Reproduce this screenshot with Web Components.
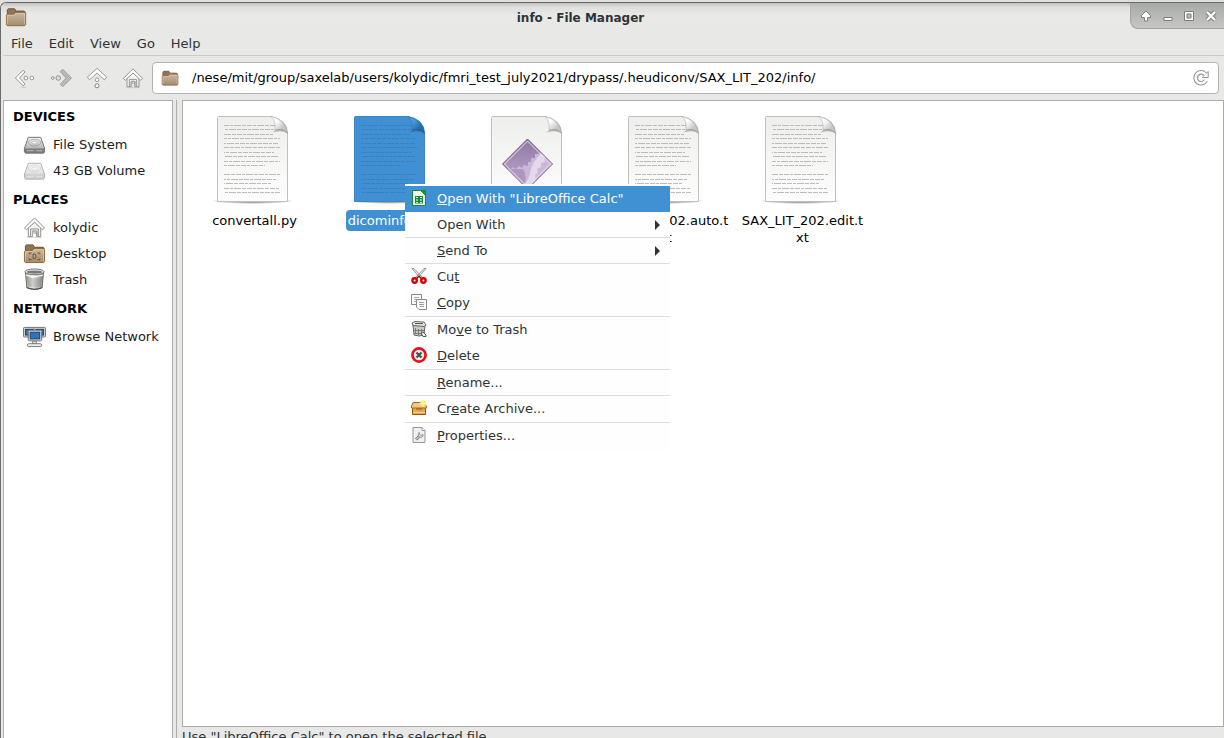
<!DOCTYPE html>
<html lang="en">
<head>
<meta charset="utf-8">
<title>info - File Manager</title>
<style>
html, body { margin: 0; height: 100%; overflow: hidden; }
body { font: 13px/17px "DejaVu Sans", sans-serif; color: #2e3436; background: #e8e8e7; }
</style>
</head>
<body>
<file-manager></file-manager>
<script>
const def = (name, html, init) => {
  const t = document.createElement('template');
  t.innerHTML = html;
  customElements.define(name, class extends HTMLElement {
    connectedCallback() {
      if (this.shadowRoot) return;
      this.attachShadow({ mode: 'open' }).append(t.content.cloneNode(true));
      if (init) init.call(this, this.shadowRoot);
    }
  });
};

const house = `<path d="M5.500 12v9.500h4.500v-6h4v6h4.500V12L12 6.500z" fill="#f6f6f5" stroke="#8b8d89"/><path d="M8 21v-7.500h8V21" fill="none" stroke="#8b8d89"/><path d="M10 21.500v-5.500h1.500v2h2v-2H15v5.500" fill="none" stroke="#aaaca8"/><path d="M12 2 1.500 12.500 3.500 14.500 12 6.500l8.500 8 2-2z" fill="#fdfdfc" stroke="#8b8d89" stroke-linejoin="round"/><path d="M4 22.500h16" stroke="#55575333"/>`;
const drive = (a, b, c, d) => `<defs><linearGradient id="g" x2="0" y2="1"><stop stop-color="${a}"/><stop offset="1" stop-color="${b}"/></linearGradient></defs><path d="M5.500 4.500h13L22.500 16H1.500z" fill="url(#g)" stroke="${c}" stroke-linejoin="round"/><path d="M1.500 15.500h21v4l-1 1.500h-19l-1-1.500z" fill="${d}" stroke="${c}"/><ellipse cx="12" cy="10" rx="6.500" ry="3.500" fill="none" stroke="${c}" stroke-opacity=".4"/><ellipse cx="12" cy="10" rx="3" ry="1.500" fill="#fff" fill-opacity=".6" stroke="${c}" stroke-opacity=".3"/><path d="M2 15.500h20" stroke="#fff" stroke-opacity=".7"/><path d="M4 18.500h7M14 18.500h6" stroke="#fff" stroke-opacity=".5"/>`;
const folder = `<defs><linearGradient id="f" x2="0" y2="1"><stop stop-color="#cdb9a0"/><stop offset="1" stop-color="#a38b6f"/></linearGradient></defs><path d="M2.500 19V4.500l1-1.500h7l1.500 2.500h9l1 1V19z" fill="#8b765c" stroke="#6e4f27"/><path d="M1.500 20.500V10l1-1h7l2-2h10l1 1v12.500l-1 1h-19z" fill="url(#f)" stroke="#8f6328"/><path d="M2.500 20V10.500l.5-.5h7l2-2h9l.5.500V20" fill="none" stroke="#e2d3bf" stroke-opacity=".7"/>`;
const bin = `<defs><linearGradient id="b"><stop stop-color="#9a9d98"/><stop offset=".4" stop-color="#f2f3f1"/><stop offset="1" stop-color="#8b8e89"/></linearGradient><pattern id="m" width="2" height="2" patternUnits="userSpaceOnUse"><path d="M0 0h1v1H0zM1 1h1v1H1z" fill="#555753"/></pattern></defs><path d="M2.500 4 4 20.500q8 3.500 16 0L21.500 4z" fill="url(#b)" stroke="#6d706b"/><path d="M4 9.500l1 9.500q7 2.500 14 0l1-9.500q-8 2.500-16 0z" fill="url(#m)" fill-opacity=".45"/><ellipse cx="12" cy="4" rx="10" ry="3" fill="#f3f4f2" stroke="#6d706b"/><ellipse cx="12" cy="4.200" rx="8" ry="1.700" fill="#777974"/><path d="M3 7.500q9 3 18 0" fill="none" stroke="#fff"/><path d="M4 20.500q8 3.500 16 0" fill="none" stroke="#3c3e3b"/>`;
const textRows = [[13,51],[17,55],[22,49],[26,56],[31,54],[35,57],[40,50],[44,54],[49,56],[53,41],[62,56],[67,53],[71,48],[76,56],[80,56]];
const sheet = (fill, edge, fold) => `<defs><linearGradient id="s" x2="0" y2="1"><stop stop-color="${fill[0]}"/><stop offset="1" stop-color="${fill[1]}"/></linearGradient><radialGradient id="sh"><stop stop-color="#000" stop-opacity=".7"/><stop offset="1" stop-color="#000" stop-opacity="0"/></radialGradient><linearGradient id="c" y2="1"><stop offset=".3" stop-color="${fold[0]}"/><stop offset=".7" stop-color="${fold[1]}"/></linearGradient></defs>
<ellipse cx="45.500" cy="89" rx="41" ry="3" fill="url(#sh)"/><path d="M10.500 89.500V5.500q0-1 1-1H64q7 1 12 5.500 4.500 4.500 4.500 11v68.500z" fill="url(#s)" stroke="${edge}"/>`;
const rows = c => `<g stroke="${c}" stroke-dasharray="5 1 3 1 7 1 4 1">${textRows.map(([y, w], i) => `<path d="M17 ${y + .5}h${w}" stroke-dashoffset="${i * 5 % 13}"/>`).join('')}</g>`;
const curl = (a, b) => `<path d="M64 4.500q5 4 4 13.500 8-2 12.500 3.500Q79 8 64 4.500z" fill="url(#c)" stroke="${b}" stroke-opacity=".3"/><path d="M68.500 18q8-2.500 12 3.500-5-4-15-1z" fill="${b}" fill-opacity=".5"/>`;
const screen = (x, y, w, h) => `<rect x="${x}.5" y="${y}.5" width="${w}" height="${h}" rx="1" fill="#deded9" stroke="#6d706b"/><rect x="${x + 2}.500" y="${y + 2}.500" width="${w - 4}" height="${h - 4}" fill="#3172b8" stroke="#173e6c"/>`;

/* name: [viewBox, markup] */
const ICONS = {
  folder: ['0 0 24 24', folder],
  desktop: ['0 0 24 24', folder + `<path d="M6.500 13v-1.500H9M15 11.500h2.500V13M6.500 17v1.500H9M15 18.500h2.500V17M10.500 12.500h2l1 1v3l-1 1h-2z" fill="none" stroke="#6e5431"/>`],
  home: ['0 0 24 24', house],
  drive: ['0 0 24 24', drive('#f4f4f3', '#b4b6b3', '#70726e', '#7c7e7b')],
  volume: ['0 0 24 24', drive('#f7f7f6', '#e2e3e1', '#b0b2ae', '#d0d1ce')],
  trash: ['0 0 24 24', bin],
  network: ['0 0 24 24', screen(0, 2, 12, 10) + screen(11, 2, 12, 10) + screen(5, 5, 14, 11) + `<path d="M10 17h4v2.500h-4z" fill="#ddd" stroke="#888a85"/><rect x="4.500" y="19.500" width="15" height="3" rx="1.500" fill="#eee" stroke="#777974"/>`],
  back: ['0 0 24 24', `<path d="M10 3.500 1.500 12l8.500 8.500 2-2L6 12l6-6.500z" fill="#fdfdfd" stroke="#8f918d" stroke-linejoin="round"/><path d="M8 22h5" stroke="#bbb"/><circle cx="13" cy="12" r="2" fill="#fff" stroke="#8f918d"/><circle cx="19.500" cy="12" r="2" fill="#fff" stroke="#8f918d"/>`],
  forward: ['0 0 24 24', `<defs><pattern id="h" width="2" height="2" patternUnits="userSpaceOnUse"><path d="M0 0h1v1H0zM1 1h1v1H1z" fill="#888"/></pattern></defs><path d="m14 2.500 9.500 9.500-9.500 9.500-3-2.500 6.500-7-6.500-7z" fill="url(#h)" stroke="#a0a29e"/><circle cx="3" cy="12" r="1.500" fill="#eee" stroke="#8f918d"/><circle cx="9" cy="12" r="2.500" fill="#ddd" stroke="#8f918d"/>`],
  up: ['0 0 24 24', `<path d="M12 1.500 1.500 11l2.500 3 8-7.500 8 7.500 2.500-3z" fill="#fdfdfd" stroke="#8f918d" stroke-linejoin="round"/><circle cx="12" cy="14" r="2" fill="#fff" stroke="#8f918d"/><circle cx="12" cy="20.500" r="2.200" fill="#fff" stroke="#777"/>`],
  reload: ['0 0 16 16', `<path d="M12.800 10.500A5.500 5.500 0 1 1 12 4" fill="none" stroke="#929491" stroke-width="4.500"/><path d="M9.500 7.500h5.700V1.500L9.500 7z" fill="#fff" stroke="#929491"/><path d="M13 10A5.500 5.500 0 1 1 12.500 4.500" fill="none" stroke="#fff" stroke-width="2.500"/><path d="M11.500 9.500A3.500 3.500 0 1 1 10 5" fill="none" stroke="#929491" stroke-width=".6"/>`],
  shade: ['0 0 12 12', `<path d="M6 1 1.500 5.500V7.500H4.500V11h3V7.500h3V5.500z" fill="#fff" stroke="#7c7e7b"/>`],
  minimize: ['0 0 12 12', `<path d="M2 7.500h8v3H2z" fill="#fff" stroke="#7c7e7b"/>`],
  maximize: ['0 0 12 12', `<path d="M1.500 1.500h9v9h-9z" fill="#fff" stroke="#7c7e7b"/><path d="M4 4h4v4H4z" fill="#bbb" stroke="#7c7e7b"/>`],
  close: ['0 0 12 12', `<path d="m2 2 8 8M10 2l-8 8" stroke="#7c7e7b" stroke-width="4.500"/><path d="m2 2 8 8M10 2l-8 8" stroke="#fff" stroke-width="2.400"/>`],
  calc: ['0 0 16 16', `<path d="M1.500.5h8l5 5v10h-13z" fill="#f3faf1" stroke="#168a35"/><path d="M9.500.5h5v5z" fill="#18a303" stroke="#168a35"/><path d="M4 6h8v7.500H4z" fill="#168a35"/><path d="M5 7h2v1H5zM9 7h2v1H9zM5 9.500h2v1H5zM9 9.500h2v1H9zM5 12h2v.8H5zM9 12h2v.8H9z" fill="#fff"/>`],
  cut: ['0 0 16 16', `<path d="M1 .5 10 11l1.500-1.500L3 .5zM15 .5 6 11 4.500 9.500 13 .5z" fill="#eeeeec" stroke="#80827e" stroke-width=".8"/><circle cx="3.600" cy="12.500" r="2.200" fill="#fff" stroke="#d40000" stroke-width="2.400"/><circle cx="12.400" cy="12.500" r="2.200" fill="#fff" stroke="#d40000" stroke-width="2.400"/><path d="m6 10 2-2 2 2" fill="none" stroke="#b00" stroke-width="1.200"/>`],
  copy: ['0 0 16 16', `<path d="M.5.5h10v10h-10z" fill="#fafafa" stroke="#898b87"/><path d="M3 3.500h5M3 5.500h5M3 7.500h3" stroke="#aaa"/><path d="M5.500 5.500h10v10H8l-2.500-2.500z" fill="#fafafa" stroke="#898b87"/><path d="M8 8.500h5M8 10.500h5M9 12.500h4" stroke="#999"/>`],
  bin: ['0 0 16 16', `<path d="m2 4 1 10q5 2 10 0l1-10z" fill="#c8cac6" stroke="#666864"/><path d="M4.500 7v6M7.500 8v6M10.500 8v6M3 9.500h10M3.500 12.500h9" stroke="#7a7c78"/><path d="m1 2 3-1.500 9 .5 2 3-2 1.500L2 4.500z" fill="#e3e5e1" stroke="#666864"/><path d="m4 2.500 8 0" stroke="#555"/><path d="m10 12 2-1 3 3v1.500h-3z" fill="#eee" stroke="#555753"/>`],
  delete: ['0 0 16 16', `<circle cx="8" cy="8" r="6.600" fill="#f2f2f1" stroke="#e8121c" stroke-width="2.700"/><path d="m5.500 5.500 5 5M10.500 5.500l-5 5" stroke="#4b4d4a" stroke-width="2.200"/>`],
  archive: ['0 0 16 16', `<path d="M1.500 6.500h13v8h-13z" fill="#e3a55b" stroke="#8f5902"/><path d="M2 2.500h11l2.500 4v1.500H.5V6z" fill="#f2c884" stroke="#a8671a"/><path d="M5 9h6" stroke="#8f5902"/><path d="M2 12.500h12" stroke="#f3cf98"/><circle cx="12" cy="3.500" r="3" fill="#fce94f"/><path d="M12 0v7M8.500 3.500h7" stroke="#fffbc0"/>`],
  properties: ['0 0 16 16', `<path d="M2 .5h9l3 3v12H2z" fill="#f0f0ef" stroke="#969893"/><path d="M11 .5v3h3" fill="#fff" stroke="#969893"/><path d="M5 12.500 8.500 9" stroke="#80827e" stroke-width="3"/><path d="M5 12.500 8.500 9" stroke="#fff"/><path d="M8 5.500Q6.500 8 8 10q2.500 1.500 4-1V7.500L10 8.500 9 7.500z" fill="#ddd" stroke="#80827e" stroke-width=".8"/>`],
  text: ['0 0 95 96', sheet(['#eeefec', '#fdfdfd'], '#bfc1bd', ['#fff', '#c4c6c2']) + rows('#bbbcb9') + curl('#fff', '#777')],
  selected: ['0 0 95 96', sheet(['#4090d4', '#4090d4'], '#3c86c5', ['#4a9ade', '#276ba6']) + rows('#3a80be') + curl('#4090d4', '#174e80')],
  script: ['0 0 95 96', sheet(['#eeefec', '#fdfdfd'], '#bfc1bd', ['#fff', '#c4c6c2']) + `<defs><linearGradient id="p" x2="0" y2="1"><stop stop-color="#8f76a4"/><stop offset="1" stop-color="#c3aed0"/></linearGradient><clipPath id="k"><path d="M46.500 28 71 52 46.500 76 22 52z"/></clipPath></defs><path d="M46.500 27 71.500 52 46.500 77 21.500 52z" fill="url(#p)" stroke="#77527f"/><g clip-path="url(#k)"><path d="M20 56l10 1 2-2 3 2 3-3 3 2 2-3 4 1 0-4 3 0 0-4 4 0 0-4 4 0 1-3h20v40H20z" fill="#c9b9d6"/><path d="M62 40l4 3-3 3 1 4-4 1 0 4-4 2 1 4-3 2 1 4-3 8H40q8-6 9-14 2-12 13-21z" fill="#e3d9ea"/><path d="M20 57h22q4 6 2 14l-8 6z" fill="#ad96bf"/></g><path d="M46.500 29 69.500 52 46.500 75 23.500 52z" fill="none" stroke="#eee3f2"/>` + curl('#fff', '#777')]
};

def('fm-icon', `<style>:host{display:block;flex:none;width:var(--w,24px);height:var(--h,var(--w,24px))}svg{display:block;width:100%;height:100%}</style>`, function (r) {
  const [box, body] = ICONS[this.getAttribute('name')];
  const t = document.createElement('template');
  t.innerHTML = `<svg viewBox="${box}" fill="none" aria-hidden="true">${body}</svg>`;
  r.append(t.content);
});

const icon = name => {
  const i = document.createElement('fm-icon');
  i.setAttribute('name', name);
  return i;
};

def('title-bar', `<style>
:host{display:grid;grid-template-columns:30px 1fr 94px;height:28px;background:linear-gradient(#bfc1be,#dededd 4px,#e9e9e8 12px,#e8e8e7);border-radius:6px 0 0 0}
.app{--w:22px;padding:3px 4px}
h1{margin:0;font-size:12px;line-height:30px;text-align:center}
.controls{display:flex;align-items:center;justify-content:space-around;padding:0 2px 0 4px;height:26px;box-sizing:border-box;background:linear-gradient(#a8aaa7,#c6c7c5);border:1px solid #a2a4a1;border-width:0 0 1px 1px;border-radius:0 0 0 8px}
button{border:0;background:none;padding:0;--w:12px}
</style><div class="app"><fm-icon name="folder"></fm-icon></div><h1><slot></slot></h1>
<div class="controls"><button aria-label="Shade"><fm-icon name="shade"></fm-icon></button><button aria-label="Minimize"><fm-icon name="minimize"></fm-icon></button><button aria-label="Maximize"><fm-icon name="maximize"></fm-icon></button><button aria-label="Close"><fm-icon name="close"></fm-icon></button></div>`);

def('menu-bar', `<style>
:host{display:flex;height:24px;margin-left:2px;border-bottom:1px solid #cbccca}
button{border:0;background:none;padding:0 8px;font:inherit;color:inherit}
</style><button>File</button><button>Edit</button><button>View</button><button>Go</button><button>Help</button>`);

def('tool-bar', `<style>
:host{display:flex;align-items:center;height:44px;padding:0 5px 0 6px}
button{border:0;background:none;padding:0;width:36px;display:flex;justify-content:center;--w:22px}
label{flex:1;display:flex;align-items:center;height:32px;box-sizing:border-box;border:1px solid #b3b4b2;border-radius:4px;background:#fff;padding-left:8px;gap:13px;--w:18px}
input{flex:1;min-width:0;border:0;outline:0;padding:0 0 2px;background:none;font:inherit;color:#000}
label button{--w:16px;width:34px}
nav{display:flex;width:145px}
</style><nav aria-label="Navigation"><button aria-label="Back"><fm-icon name="back"></fm-icon></button><button aria-label="Forward"><fm-icon name="forward"></fm-icon></button><button aria-label="Up"><fm-icon name="up"></fm-icon></button><button aria-label="Home"><fm-icon name="home"></fm-icon></button></nav>
<label><fm-icon name="folder"></fm-icon><input aria-label="Location" value="/nese/mit/group/saxelab/users/kolydic/fmri_test_july2021/drypass/.heudiconv/SAX_LIT_202/info/"><button aria-label="Reload"><fm-icon name="reload"></fm-icon></button></label>`);

def('side-group', `<style>
:host{display:block;color:#000}
h2{margin:0;padding-left:9px;font-size:13px;line-height:31px}
</style><h2></h2><slot></slot>`, function (r) { r.querySelector('h2').textContent = this.getAttribute('heading'); });

def('side-item', `<style>
:host{display:block}
a{display:flex;align-items:center;height:26px;box-sizing:border-box;padding:0 0 2px 19px;gap:7px;color:#1c1c1c;text-decoration:none;white-space:nowrap;--w:23px}
</style><a href="#"><span><slot></slot></span></a>`, function (r) {
  r.querySelector('a').prepend(icon(this.getAttribute('icon')));
});

def('file-item', `<style>
:host{display:flex;flex-direction:column;align-items:center;color:#000;--w:95px;--h:96px}
span{max-width:126px;margin-top:2px;padding:2px;border-radius:4px;text-align:center;word-break:break-all}
:host([selected]) span{background:#4090d4;color:#fff}
</style><span><slot></slot></span>`, function (r) {
  r.insertBefore(icon(this.getAttribute('icon')), r.querySelector('span'));
});

def('menu-item', `<style>
:host{display:block}
button{display:flex;align-items:center;gap:10px;width:100%;height:26px;padding:0 10px 2px 6px;border:0;background:none;font:inherit;color:#2e3436;text-align:left;--w:16px}
:host(:not([icon])) button{height:25px;padding:0 10px 0 32px}
:host([active]) button{background:#4090d4;color:#fff}
span{flex:1}
.arrow{display:none;border:5px solid transparent;border-left:5px solid #2e3436;border-right:0}
:host([submenu]) .arrow{display:block}
</style><button role="menuitem"><span><slot></slot></span><i class="arrow"></i></button>`, function (r) {
  if (this.hasAttribute('icon')) r.querySelector('button').prepend(icon(this.getAttribute('icon')));
});

def('context-menu', `<style>
:host{display:block;width:265px;padding:2px 0;background:#fefefe}
::slotted(hr){height:1px;margin:0;border:0;background:#dcdddc}
</style><slot></slot>`);

def('file-manager', `<style>
:host{display:flex;flex-direction:column;height:100%;box-sizing:border-box;border-top:2px solid #dfe0dd;position:relative}
.frame{flex:1;min-height:0;display:flex;flex-direction:column;border:1px solid #6a6c69;border-width:1px 0 0 1px;background:#e8e8e7;border-radius:6px 0 0 0}
main{flex:1;min-height:0;display:grid;grid-template-columns:170px 4px 1fr;padding-left:2px}
aside{background:#fff;border:1px solid #acadab;border-bottom:0}
.grip{border-right:1px solid #acadab}
section{display:flex;flex-direction:column;min-width:0;padding-left:5px}
.files{flex:1;min-height:0;display:grid;grid-template-columns:repeat(auto-fill,137px);align-content:start;padding:11px 3px;background:#fff;border:1px solid #acadab}
footer{flex:none;height:10px;padding-top:1px;overflow:hidden;white-space:nowrap}
context-menu{position:absolute;left:405px;top:182px}
</style>
<div class="frame">
<title-bar>info - File Manager</title-bar>
<menu-bar></menu-bar>
<tool-bar></tool-bar>
<main>
<aside>
<side-group heading="DEVICES"><side-item icon="drive">File System</side-item><side-item icon="volume">43 GB Volume</side-item></side-group>
<side-group heading="PLACES"><side-item icon="home">kolydic</side-item><side-item icon="desktop">Desktop</side-item><side-item icon="trash">Trash</side-item></side-group>
<side-group heading="NETWORK"><side-item icon="network">Browse Network</side-item></side-group>
</aside>
<div class="grip"></div>
<section>
<div class="files">
<file-item icon="text">convertall.py</file-item>
<file-item icon="selected" selected>dicominfo.tsv</file-item>
<file-item icon="script" aria-label="filegroup.json"></file-item>
<file-item icon="text">SAX_LIT_202.auto.txt</file-item>
<file-item icon="text">SAX_LIT_202.edit.txt</file-item>
</div>
<footer>Use "LibreOffice Calc" to open the selected file.</footer>
</section>
</main>
</div>
<context-menu role="menu">
<menu-item icon="calc" active><u>O</u>pen With "LibreOffice Calc"</menu-item>
<menu-item submenu>Open With</menu-item><hr>
<menu-item submenu><u>S</u>end To</menu-item><hr>
<menu-item icon="cut">Cu<u>t</u></menu-item>
<menu-item icon="copy"><u>C</u>opy</menu-item><hr>
<menu-item icon="bin">Mo<u>v</u>e to Trash</menu-item>
<menu-item icon="delete"><u>D</u>elete</menu-item><hr>
<menu-item><u>R</u>ename...</menu-item><hr>
<menu-item icon="archive">Cr<u>e</u>ate Archive...</menu-item><hr>
<menu-item icon="properties"><u>P</u>roperties...</menu-item>
</context-menu>`);
</script>
</body>
</html>
